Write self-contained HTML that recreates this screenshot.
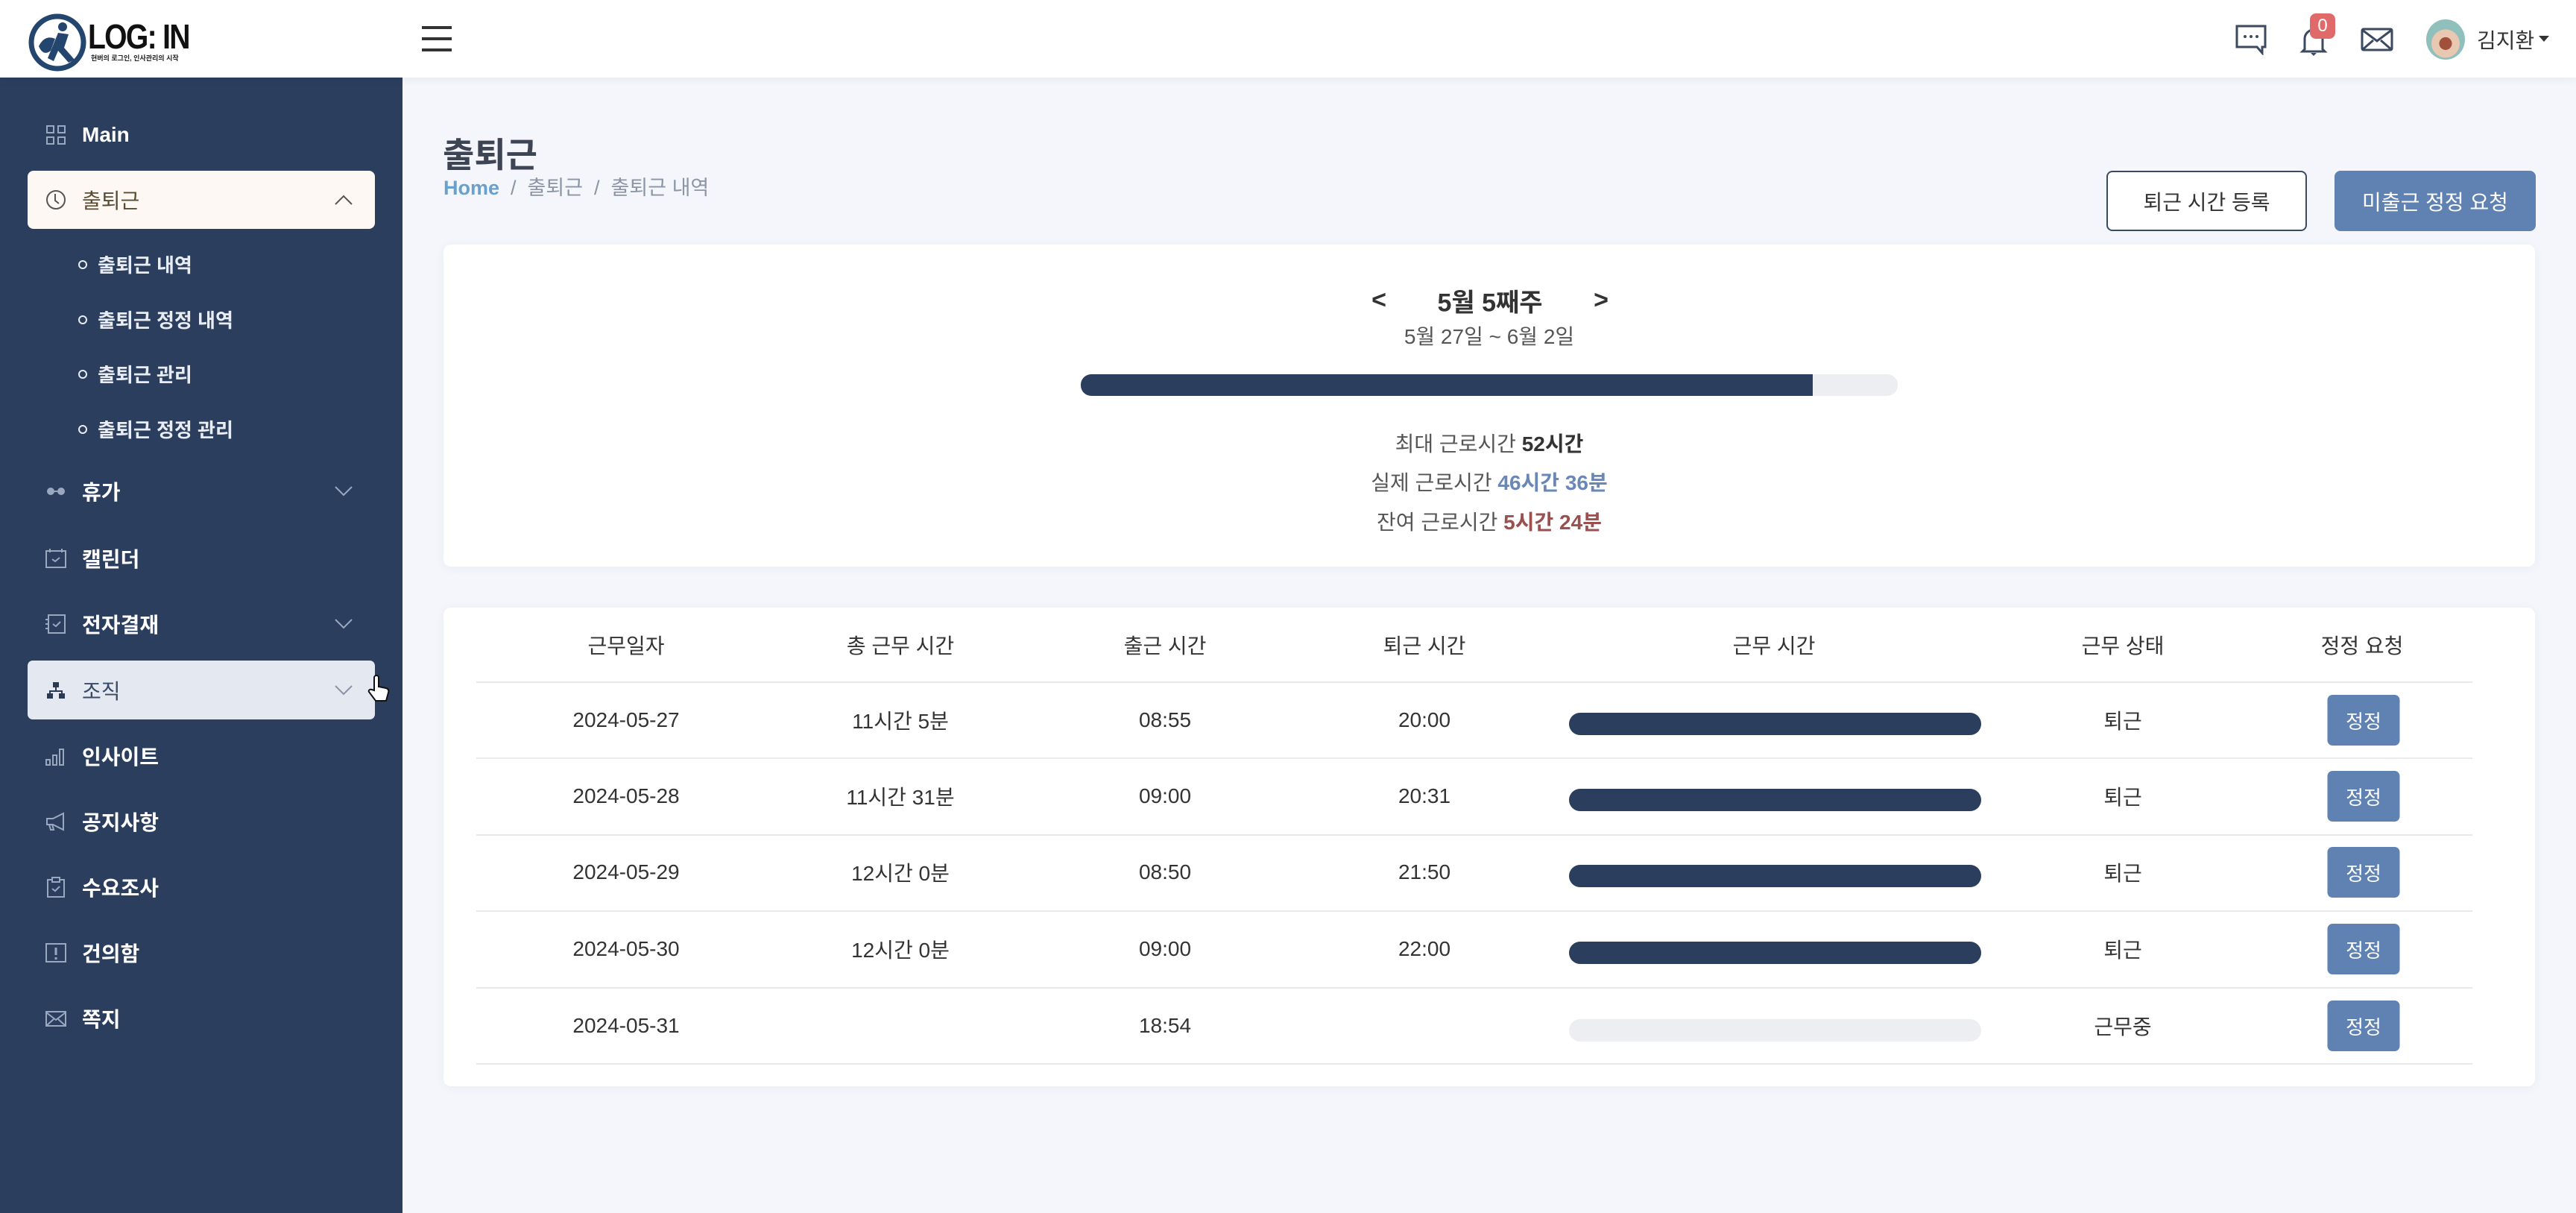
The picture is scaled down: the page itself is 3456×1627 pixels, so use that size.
<!DOCTYPE html>
<html><head><meta charset="utf-8">
<style>
*{box-sizing:border-box;margin:0;padding:0}
body{width:3456px;height:1627px;overflow:hidden;background:#f4f6fb;font-family:"Liberation Sans","Noto Sans CJK KR",sans-serif;color:#333;position:relative}
.abs{position:absolute}
.hdr{left:0;top:0;width:3456px;height:104px;background:#fff;box-shadow:0 2px 12px rgba(0,0,0,.06);z-index:2}
.side{left:0;top:104px;width:540px;height:1523px;background:#2b3e5e}
.it{position:absolute;left:0;width:540px;height:60px;display:flex;align-items:center;font-size:28px;font-weight:bold;color:#fff}
.it .ic{position:absolute;left:60px;top:50%;transform:translateY(-50%);width:30px;height:30px}
.it .tx{position:absolute;left:110px}
.it .ch{position:absolute;left:448px;top:50%;transform:translateY(-50%)}
.sub{position:absolute;left:105px;font-size:26px;font-weight:bold;color:#e8ecf3;display:flex;align-items:center}
.sub:before{content:"";width:8px;height:8px;border:2px solid #e8ecf3;border-radius:50%;margin-right:14px}
.c{position:absolute;transform:translate(-50%,-50%);white-space:nowrap;font-size:28px;color:#333}
.card{background:#fff;border-radius:10px;box-shadow:0 2px 14px rgba(40,60,100,.05)}
.btn{position:absolute;width:97px;height:68px;background:#5f82b3;border-radius:7px;color:#fff;font-size:26px;display:flex;align-items:center;justify-content:center;transform:translate(-50%,-50%)}
.bar{position:absolute;left:2105px;width:553px;height:30px;border-radius:15px;background:#2b3e5e;transform:translateY(-50%)}
.line{position:absolute;left:639px;width:2678px;height:2px;background:#e8e9ec}
</style></head><body>
<div class="abs hdr">
  <svg class="abs" style="left:38px;top:18px" width="78" height="78" viewBox="0 0 78 78"><circle cx="39" cy="39" r="35" fill="none" stroke="#24456e" stroke-width="7"/><path d="M14 44 Q22 28 36 34 L30 50 Q20 58 14 44Z" fill="#24456e"/><circle cx="46" cy="18" r="6" fill="#24456e"/><path d="M40 26 L54 28 L48 46 L62 62 L54 66 L40 50 L34 64 L26 60Z" fill="#24456e"/></svg>
  <div class="abs" style="left:118px;top:22px;font-size:46px;font-weight:bold;letter-spacing:-2px;color:#111;transform:scaleX(.85);transform-origin:left">LOG: IN</div>
  <div class="abs" style="left:122px;top:71px;font-size:9px;color:#222;font-weight:bold">현버의 로그인, 인사관리의 시작</div>
  <div class="abs" style="left:566px;top:35px;width:40px;height:4px;background:#333"></div>
  <div class="abs" style="left:566px;top:50px;width:40px;height:4px;background:#333"></div>
  <div class="abs" style="left:566px;top:65px;width:40px;height:4px;background:#333"></div>
  <svg class="abs" style="left:2998px;top:32px" width="44" height="42" viewBox="0 0 44 42"><path d="M3 3h38v28h-4v8l-7-8H3z" fill="none" stroke="#3b4a60" stroke-width="3"/><circle cx="14" cy="17" r="2" fill="#3b4a60"/><circle cx="22" cy="17" r="2" fill="#3b4a60"/><circle cx="30" cy="17" r="2" fill="#3b4a60"/></svg>
  <svg class="abs" style="left:3084px;top:30px" width="40" height="46" viewBox="0 0 40 46"><path d="M8 36V22a12 12 0 0 1 24 0v14l3 3H5z" fill="none" stroke="#3b4a60" stroke-width="3"/><path d="M16 41h8l-4 4z" fill="#3b4a60"/></svg>
  <div class="abs" style="left:3099px;top:18px;width:34px;height:34px;background:#e06a6a;border-radius:8px;color:#fff;font-size:24px;text-align:center;line-height:34px">0</div>
  <svg class="abs" style="left:3167px;top:37px" width="44" height="32" viewBox="0 0 44 32"><rect x="2" y="2" width="40" height="28" rx="2" fill="none" stroke="#3b4a60" stroke-width="3"/><path d="M2 3l20 15L42 3M2 30l15-13M42 30L27 17" fill="none" stroke="#3b4a60" stroke-width="3"/></svg>
  <div class="abs" style="left:3255px;top:26px;width:52px;height:54px;border-radius:50%;background:radial-gradient(circle at 50% 60%,#a0503c 0 20%,#e8c8b0 21% 45%,#8fc0bc 46%)"></div>
  <div class="abs" style="left:3323px;top:33px;font-size:28px;color:#333">김지환</div>
  <div class="abs" style="left:3406px;top:48px;border-left:7px solid transparent;border-right:7px solid transparent;border-top:8px solid #333"></div>
</div>

<div class="abs side"></div>
<!-- sidebar -->
<div class="it" style="top:151px"><svg class="ic" viewBox="0 0 30 30"><g fill="none" stroke="#9aa8bf" stroke-width="2"><rect x="3" y="3" width="9" height="9"/><rect x="18" y="3" width="9" height="9"/><rect x="3" y="18" width="9" height="9"/><rect x="18" y="18" width="9" height="9"/></g></svg><span class="tx">Main</span></div>
<div class="abs" style="left:37px;top:229px;width:466px;height:78px;background:#fdf8f4;border-radius:8px"></div>
<div class="it" style="top:238px;color:#5a4a32;font-weight:normal"><svg class="ic" viewBox="0 0 30 30"><circle cx="15" cy="15" r="12" fill="none" stroke="#555" stroke-width="2"/><path d="M14 7v9l5 4" fill="none" stroke="#555" stroke-width="2"/></svg><span class="tx">출퇴근</span><svg class="ch" width="26" height="16" viewBox="0 0 26 16"><path d="M2 14L13 3l11 11" fill="none" stroke="#555" stroke-width="2"/></svg></div>
<div class="sub" style="top:336px">출퇴근 내역</div>
<div class="sub" style="top:410px">출퇴근 정정 내역</div>
<div class="sub" style="top:483px">출퇴근 관리</div>
<div class="sub" style="top:557px">출퇴근 정정 관리</div>
<div class="it" style="top:629px"><svg class="ic" viewBox="0 0 30 30"><circle cx="8" cy="15" r="5" fill="#9aa8bf"/><circle cx="22" cy="15" r="5" fill="#9aa8bf"/><path d="M13 15h4" stroke="#9aa8bf" stroke-width="2"/></svg><span class="tx">휴가</span><svg class="ch" width="26" height="16" viewBox="0 0 26 16"><path d="M2 2l11 11L24 2" fill="none" stroke="#9aa8bf" stroke-width="2"/></svg></div>
<div class="it" style="top:719px"><svg class="ic" viewBox="0 0 30 30"><rect x="2" y="5" width="26" height="22" fill="none" stroke="#9aa8bf" stroke-width="2"/><path d="M7 2v5M23 2v5M10 16l4 3 6-5" fill="none" stroke="#9aa8bf" stroke-width="2"/></svg><span class="tx">캘린더</span></div>
<div class="it" style="top:807px"><svg class="ic" viewBox="0 0 30 30"><rect x="5" y="3" width="22" height="24" fill="none" stroke="#9aa8bf" stroke-width="2"/><path d="M1 9h5M1 15h5M1 21h5M11 15l4 3 6-6" fill="none" stroke="#9aa8bf" stroke-width="2"/></svg><span class="tx">전자결재</span><svg class="ch" width="26" height="16" viewBox="0 0 26 16"><path d="M2 2l11 11L24 2" fill="none" stroke="#9aa8bf" stroke-width="2"/></svg></div>
<div class="abs" style="left:37px;top:886px;width:466px;height:79px;background:#e4e8f0;border-radius:7px"></div>
<div class="it" style="top:896px;color:#3a4a66;font-weight:normal"><svg class="ic" viewBox="0 0 30 30"><g fill="#2b3a52"><rect x="11" y="4" width="8" height="7"/><rect x="3" y="19" width="8" height="7"/><rect x="19" y="19" width="8" height="7"/><path d="M14 11h2v4h8v4h-2v-2H8v2H6v-4h8z"/></g></svg><span class="tx">조직</span><svg class="ch" width="26" height="16" viewBox="0 0 26 16"><path d="M2 2l11 11L24 2" fill="none" stroke="#8a94a6" stroke-width="2"/></svg></div>
<svg class="abs" style="left:492px;top:904px" width="32" height="40" viewBox="0 0 32 40"><path d="M10 22V5a3 3 0 0 1 6 0v12l10 2c3 1 4 3 3 6l-3 11H12L3 24c-1-2 1-4 4-3z" fill="#fff" stroke="#111" stroke-width="2"/></svg>
<div class="it" style="top:984px"><svg class="ic" viewBox="0 0 30 30"><g fill="none" stroke="#9aa8bf" stroke-width="2"><rect x="2" y="20" width="5" height="7"/><rect x="11" y="14" width="5" height="13"/><rect x="20" y="6" width="5" height="21"/></g></svg><span class="tx">인사이트</span></div>
<div class="it" style="top:1072px"><svg class="ic" viewBox="0 0 30 30"><path d="M3 11h8l14-7v22l-14-7H3zM6 19l2 7h4l-2-7" fill="none" stroke="#9aa8bf" stroke-width="2"/></svg><span class="tx">공지사항</span></div>
<div class="it" style="top:1160px"><svg class="ic" viewBox="0 0 30 30"><rect x="4" y="5" width="22" height="23" fill="none" stroke="#9aa8bf" stroke-width="2"/><rect x="10" y="2" width="10" height="6" fill="#2b3e5e" stroke="#9aa8bf" stroke-width="2"/><path d="M10 17l4 3 6-6" fill="none" stroke="#9aa8bf" stroke-width="2"/></svg><span class="tx">수요조사</span></div>
<div class="it" style="top:1248px"><svg class="ic" viewBox="0 0 30 30"><rect x="2" y="3" width="26" height="24" fill="none" stroke="#9aa8bf" stroke-width="2"/><path d="M15 8v10M15 21v3" stroke="#9aa8bf" stroke-width="3"/></svg><span class="tx">건의함</span></div>
<div class="it" style="top:1336px"><svg class="ic" viewBox="0 0 30 30"><rect x="2" y="6" width="26" height="19" fill="none" stroke="#9aa8bf" stroke-width="2"/><path d="M2 7l13 10L28 7M2 25l10-9M28 25l-10-9" fill="none" stroke="#9aa8bf" stroke-width="2"/></svg><span class="tx">쪽지</span></div>

<!-- main -->
<div class="abs" style="left:594px;top:172px;font-size:46px;font-weight:bold;color:#3d4555">출퇴근</div>
<div class="abs" style="left:595px;top:230px;font-size:27px;color:#8b95a5"><span style="color:#6aa0cc;font-weight:bold">Home</span>&nbsp; / &nbsp;출퇴근&nbsp; / &nbsp;출퇴근 내역</div>
<div class="abs" style="left:2826px;top:229px;width:269px;height:81px;border:2px solid #3a4a60;border-radius:8px;background:#fff;font-size:28px;display:flex;align-items:center;justify-content:center;color:#333">퇴근 시간 등록</div>
<div class="abs" style="left:3132px;top:229px;width:270px;height:81px;border-radius:8px;background:#5f82b3;font-size:28px;display:flex;align-items:center;justify-content:center;color:#fff">미출근 정정 요청</div>

<div class="abs card" style="left:595px;top:328px;width:2806px;height:432px"></div>
<div class="c" style="left:1850px;top:403px;font-size:34px;font-weight:bold">&lt;</div>
<div class="c" style="left:1999px;top:403px;font-size:34px;font-weight:bold">5월 5째주</div>
<div class="c" style="left:2148px;top:403px;font-size:34px;font-weight:bold">&gt;</div>
<div class="c" style="left:1998px;top:450px;color:#555">5월 27일 ~ 6월 2일</div>
<div class="abs" style="left:1450px;top:502px;width:1096px;height:29px;border-radius:14px;background:#eceef2"></div>
<div class="abs" style="left:1450px;top:502px;width:982px;height:29px;border-radius:14px 0 0 14px;background:#2b3e5e"></div>
<div class="c" style="left:1998px;top:594px;color:#555">최대 근로시간 <b style="color:#333">52시간</b></div>
<div class="c" style="left:1998px;top:646px;color:#555">실제 근로시간 <b style="color:#6b87b5">46시간 36분</b></div>
<div class="c" style="left:1998px;top:699px;color:#555">잔여 근로시간 <b style="color:#9b4f4f">5시간 24분</b></div>

<div class="abs card" style="left:595px;top:815px;width:2806px;height:642px"></div>
<div class="c" style="left:840px;top:865px">근무일자</div>
<div class="c" style="left:1208px;top:865px">총 근무 시간</div>
<div class="c" style="left:1563px;top:865px">출근 시간</div>
<div class="c" style="left:1911px;top:865px">퇴근 시간</div>
<div class="c" style="left:2380px;top:865px">근무 시간</div>
<div class="c" style="left:2848px;top:865px">근무 상태</div>
<div class="c" style="left:3169px;top:865px">정정 요청</div>
<div class="line" style="top:914px"></div>
<div class="line" style="top:1016px"></div>
<div class="line" style="top:1119px"></div>
<div class="line" style="top:1221px"></div>
<div class="line" style="top:1324px"></div>
<div class="line" style="top:1426px"></div>

<div class="c" style="left:840px;top:966px">2024-05-27</div><div class="c" style="left:1208px;top:966px">11시간 5분</div><div class="c" style="left:1563px;top:966px">08:55</div><div class="c" style="left:1911px;top:966px">20:00</div><div class="bar" style="top:971px"></div><div class="c" style="left:2848px;top:966px">퇴근</div><div class="btn" style="left:3171px;top:966px">정정</div>
<div class="c" style="left:840px;top:1068px">2024-05-28</div><div class="c" style="left:1208px;top:1068px">11시간 31분</div><div class="c" style="left:1563px;top:1068px">09:00</div><div class="c" style="left:1911px;top:1068px">20:31</div><div class="bar" style="top:1073px"></div><div class="c" style="left:2848px;top:1068px">퇴근</div><div class="btn" style="left:3171px;top:1068px">정정</div>
<div class="c" style="left:840px;top:1170px">2024-05-29</div><div class="c" style="left:1208px;top:1170px">12시간 0분</div><div class="c" style="left:1563px;top:1170px">08:50</div><div class="c" style="left:1911px;top:1170px">21:50</div><div class="bar" style="top:1175px"></div><div class="c" style="left:2848px;top:1170px">퇴근</div><div class="btn" style="left:3171px;top:1170px">정정</div>
<div class="c" style="left:840px;top:1273px">2024-05-30</div><div class="c" style="left:1208px;top:1273px">12시간 0분</div><div class="c" style="left:1563px;top:1273px">09:00</div><div class="c" style="left:1911px;top:1273px">22:00</div><div class="bar" style="top:1278px"></div><div class="c" style="left:2848px;top:1273px">퇴근</div><div class="btn" style="left:3171px;top:1273px">정정</div>
<div class="c" style="left:840px;top:1376px">2024-05-31</div><div class="c" style="left:1563px;top:1376px">18:54</div><div class="bar" style="top:1382px;background:#eceef2"></div><div class="c" style="left:2848px;top:1376px">근무중</div><div class="btn" style="left:3171px;top:1376px">정정</div>
</body></html>
